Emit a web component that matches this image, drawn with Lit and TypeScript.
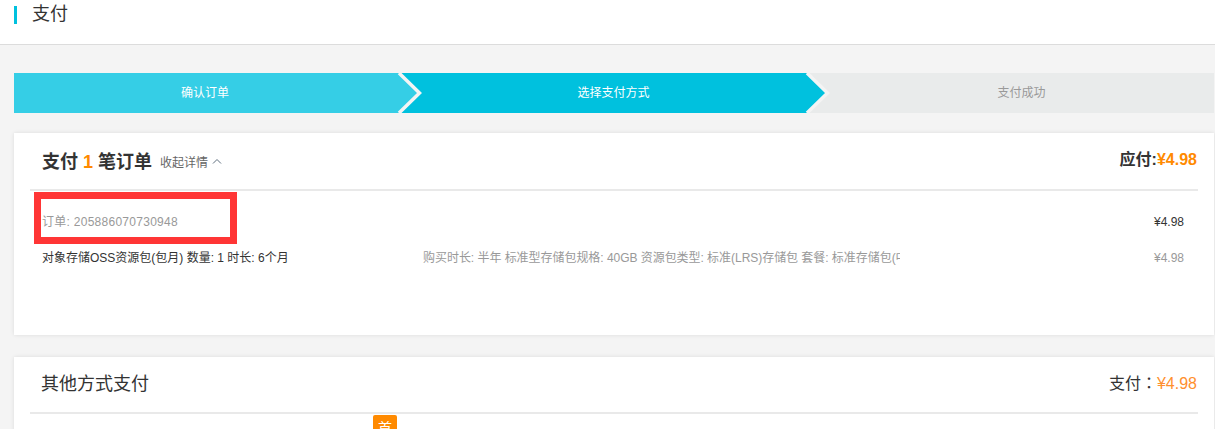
import { LitElement, html, css, svg } from "lit";
import { customElement } from "lit/decorators.js";

@customElement("app-root")
export class AppRoot extends LitElement {
  static styles = css`
    :host {
      display: block;
      width: 1215px;
      height: 429px;
      overflow: hidden;
      background: #f4f4f4;
      color: #333;
      font-family: "Liberation Sans", "Noto Sans CJK SC", sans-serif;
      font-size: 12px;
      position: relative;
    }
    .top {
      height: 44px;
      background: #fff;
      border-bottom: 1px solid #dcdcdc;
      padding-left: 14px;
      display: flex;
      align-items: flex-start;
    }
    .top-mark {
      width: 3px;
      height: 18px;
      margin-top: 6px;
      background: #00c1de;
    }
    .top-title {
      margin-left: 15px;
      font-size: 18px;
      line-height: 28px;
      color: #333;
    }
    .main {
      padding: 28px 1px 0 14px;
    }
    .steps {
      display: flex;
      height: 40px;
      color: #fff;
      line-height: 40px;
      text-align: center;
    }
    .step {
      position: relative;
      box-sizing: border-box;
    }
    .step svg {
      position: absolute;
      left: 100%;
      top: 0;
      z-index: 1;
    }
    .s1 { width: 382px; background: #35cee6; }
    .s2 { width: 408px; padding-left: 27px; background: #00c1de; }
    .s3 { flex: 1; padding-left: 25px; background: #e9ebeb; color: #999; }
    .card {
      background: #fff;
      box-shadow: 0 0 4px rgba(0, 0, 0, 0.1);
      padding: 0 16px;
    }
    .order { margin-top: 20px; height: 202px; }
    .other { margin-top: 22px; height: 80px; position: relative; }
    .card-head {
      display: flex;
      align-items: center;
      box-sizing: content-box;
      padding-left: 12px;
      border-bottom: 2px solid #e9e9e9;
    }
    .order .card-head { height: 52px; padding-bottom: 4px; }
    .other .card-head { height: 49px; padding-bottom: 6px; }
    .h-strong { font-size: 18px; font-weight: bold; color: #333; white-space: pre; position: relative; top: 1px; }
    .accent { color: #ff8a00; }
    .toggle { margin-left: 8px; color: #666; display: flex; align-items: center; gap: 4px; position: relative; top: 2px; }
    .total { margin-left: auto; margin-right: 1px; font-size: 16px; font-weight: bold; position: relative; top: -1px; }
    .h-plain { font-size: 18px; color: #333; margin-left: -1px; }
    .pay { margin-left: auto; margin-right: 1px; font-size: 16px; color: #333; }
    .pay .accent { color: #ff8f2e; }
    .colon { font-family: "Liberation Sans", "Noto Sans CJK TC", sans-serif; }
    .row {
      display: flex;
      padding-left: 12px;
      white-space: nowrap;
    }
    .r1 { line-height: 36px; margin-top: 13px; color: #999; }
    .r2 { line-height: 36px; color: #333; }
    .order-no { letter-spacing: 0.27px; }
    .name { width: 381px; }
    .spec { width: 477px; overflow: hidden; color: #999; letter-spacing: -0.04px; }
    .price { margin-left: auto; margin-right: 14px; }
    .r1 .price { color: #333; }
    .r2 .price { color: #999; }
    .badge {
      position: absolute;
      left: 359px;
      top: 58px;
      width: 24px;
      height: 22px;
      background: #ff8a00;
      border-radius: 2px;
      color: #fff;
      font-size: 14px;
      line-height: 26px;
      text-align: center;
    }
    .mark {
      position: absolute;
      left: 34px;
      top: 192px;
      width: 203px;
      height: 52px;
      box-sizing: border-box;
      border: 7px solid #ff3535;
    }
  `;

  private arrow(fill: string) {
    return html`<svg width="26" height="40" viewBox="0 0 26 40">
      ${svg`<path d="M0 0 L3 0 L23 20 L3 40 L0 40 Z" fill="${fill}"></path>
      <path d="M0 0 L20.5 20 L0 40" transform="translate(3 0)" fill="none" stroke="#f4f4f4" stroke-width="3.5"></path>`}
    </svg>`;
  }

  render() {
    return html`
      <div class="top">
        <div class="top-mark"></div>
        <div class="top-title">支付</div>
      </div>
      <div class="main">
        <div class="steps">
          <div class="step s1">确认订单${this.arrow("#35cee6")}</div>
          <div class="step s2">选择支付方式${this.arrow("#00c1de")}</div>
          <div class="step s3">支付成功</div>
        </div>
        <section class="card order">
          <div class="card-head">
            <span class="h-strong">支付 <span class="accent">1</span> 笔订单</span>
            <span class="toggle">收起详情
              <svg width="10" height="6" viewBox="0 0 10 6"><path d="M1 5.5 L5 1.5 L9 5.5" fill="none" stroke="#5f6f7f" stroke-width="1"></path></svg>
            </span>
            <span class="total">应付:<span class="accent">¥4.98</span></span>
          </div>
          <div class="row r1"><span class="order-no">订单: 205886070730948</span><span class="price">¥4.98</span></div>
          <div class="row r2">
            <span class="name">对象存储OSS资源包(包月) 数量: 1 时长: 6个月</span>
            <span class="spec">购买时长: 半年 标准型存储包规格: 40GB 资源包类型: 标准(LRS)存储包 套餐: 标准存储包(中国大陆通用)</span>
            <span class="price">¥4.98</span>
          </div>
        </section>
        <section class="card other">
          <div class="card-head">
            <span class="h-plain">其他方式支付</span>
            <span class="pay">支付<span class="colon">：</span><span class="accent">¥4.98</span></span>
          </div>
          <div class="badge">首</div>
        </section>
      </div>
      <div class="mark"></div>
    `;
  }
}
